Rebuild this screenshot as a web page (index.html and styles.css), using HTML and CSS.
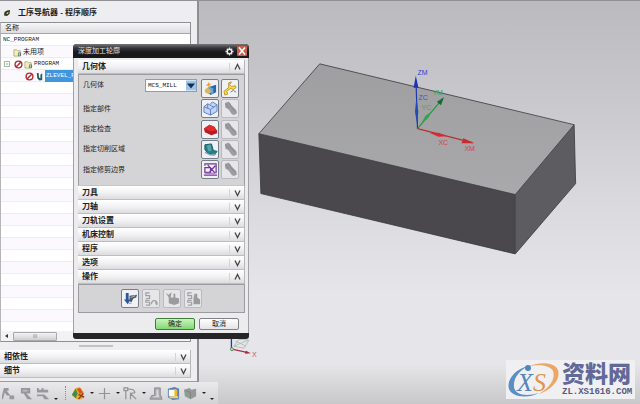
FILE: index.html
```html
<!DOCTYPE html>
<html lang="zh-CN">
<head>
<meta charset="utf-8">
<meta name="viewport" content="width=device-width, initial-scale=1">
<title>工序导航器 - 程序顺序</title>
<link rel="stylesheet" href="styles.css">
</head>
<body>
<svg class="defs" aria-hidden="true">
  <symbol id="down" viewBox="0 0 8 8"><path d="M1.5 1.5 4 6.5 6.500 1.500" fill="none" stroke="#444" stroke-width="1.300"/></symbol>
  <symbol id="up" viewBox="0 0 8 8"><path d="M1.500 6.500 4 1.500 6.500 6.500" fill="none" stroke="#444" stroke-width="1.300"/></symbol>
  <symbol id="torch" viewBox="0 0 16 16"><path d="M2 2 6 .5 9 4.500 14 9.500 15 13 12 15 9.500 14 6 9 2.500 7Z" fill="#9c9ca2"/><path d="M3 3 6 7 M7 2 8 5.500 13 11" stroke="#85858b" stroke-width="1" fill="none"/></symbol>
  <symbol id="ban" viewBox="0 0 10 10"><circle cx="5" cy="5" r="3.800" fill="#fff" stroke="#b3262c" stroke-width="1.500"/><path d="M2.500 7.500 7.500 2.500" stroke="#b3262c" stroke-width="1.500"/></symbol>
  <symbol id="folder" viewBox="0 0 10 10"><path d="M1 2H4L5 3H8V9H1Z" fill="#f3efb5" stroke="#a29e68" stroke-width=".8"/><path d="M5.500 5H9V9H5.500Z" fill="#667a80"/><path d="M7 5.500V8.500" stroke="#dfe" stroke-width=".8"/></symbol>
</svg>
<div class="app">
  <aside class="navigator">
    <h1 class="nav-title">
      <svg class="nav-mark" viewBox="0 0 8 8" aria-hidden="true"><path d="M1.500 3 4 1.500 7 1 6.500 5 4 7 1 6.500Z" fill="#33391e"/><path d="M3 4.500 5.500 2.500 5 5Z" fill="#d5df86"/></svg>
      <span>工序导航器 - 程序顺序</span>
    </h1>
    <div class="tree">
      <div class="tree-head">名称</div>
      <ul class="tree-rows">
        <li class="mono">NC_PROGRAM</li>
        <li class="level-1"><svg class="icon-s"><use href="#folder"/></svg>未用项</li>
        <li class="mono level-0"><svg class="expander" viewBox="0 0 7 7"><path d="M.5.5H6.500V6.500H.5ZM2 3.500H5" fill="none" stroke="#8da58d"/></svg><svg class="icon-s"><use href="#ban"/></svg><svg class="icon-s"><use href="#folder"/></svg>PROGRAM</li>
        <li class="mono level-2"><svg class="icon-s"><use href="#ban"/></svg><svg class="icon-s" viewBox="0 0 10 10"><path d="M2 1 4 1 4.500 6 6 7V3L8 1.500V9L5 9.500 2.500 7Z" fill="#245b62"/></svg><span class="selected">ZLEVEL_PROFILE</span></li>
      </ul>
      <div class="scroller"><svg class="scroll-arrow" viewBox="0 0 5 6"><path d="M4 1V5L1 3Z" fill="#333"/></svg><span class="thumb">III</span></div>
    </div>
    <div class="splitter"></div>
    <div class="drawers">
      <button class="bar" type="button"><span>相依性</span><svg class="chev"><use href="#down"/></svg></button>
      <button class="bar" type="button"><span>细节</span><svg class="chev"><use href="#down"/></svg></button>
    </div>
  </aside>

  <main class="viewport">
    <svg class="scene" viewBox="198 0 442 382" preserveAspectRatio="xMinYMin meet" role="img" aria-label="毛坯">
      <defs><linearGradient id="topface" x1="0" y1="0" x2="0" y2="1"><stop offset="0" stop-color="#9f9fa2"/><stop offset="1" stop-color="#a9a9ab"/></linearGradient></defs>
      <path d="M319 64 574 125 515 195 258 134Z" fill="url(#topface)"/>
      <path d="M258 134 515 195V254.500L260 194Z" fill="#4b484d"/>
      <path d="M515 195 574 125 575.500 184 515 254.500Z" fill="#5d5c60"/>
      <path d="M319 64 574 125 515 195 258 134ZM258 134 260 194 515 254.500 575.500 184 574 125M515 195V254" fill="none" stroke="#3a3a3e" stroke-width=".8"/>
      <g stroke-width="1.200" font-family="Liberation Sans" font-size="7">
        <path d="M417 129 415.500 80" stroke="#2036a8"/><path d="M415.300 76 418 88H413Z" fill="#1e33b5"/><path d="M415.800 98 417.800 112 416.500 124 414.500 112Z" fill="#2448b6"/>
        <path d="M417 129 442 99" stroke="#209a3c"/><path d="M443.500 97.500 440.500 105.500 436.500 102Z" fill="#176a32"/><path d="M431 112 428 118 420 125 425 116Z" fill="#31a34b"/>
        <path d="M417 129 472 143" stroke="#b83030"/><path d="M447 136.500 438 137 429 133 438 133Z" fill="#d52a32"/><path d="M474 143.500 461 143.500 463 138.500Z" fill="#c92a30"/>
        <text x="417" y="75" fill="#2745d2">ZM</text><text x="418" y="100" fill="#3955ca">ZC</text>
        <text x="432" y="95" fill="#3aa34b">YM</text><text x="421" y="110" fill="#579d63">YC</text>
        <text x="438" y="145" fill="#c64a4c">XC</text><text x="464" y="151" fill="#c64a4c">XM</text>
      </g>
      <g fill="none">
        <path d="M230.500 336V349" stroke="#2637b2" stroke-width="1.300"/>
        <path d="M233 347 238 340 248 341 243 349ZM235 342 245 347M233 347 247 341" stroke="#aab8ae" stroke-width=".8"/>
        <path d="M231 350 247 353.500" stroke="#b52b40" stroke-width="1.300"/><path d="M250 354 244 354.500 245 351.500Z" fill="#a8283b"/>
        <circle cx="231" cy="350" r="1.500" fill="#d2e5d4" stroke="#55875b"/>
        <text x="251" y="358" font-family="Liberation Sans" font-size="7" fill="#c25a60">X</text>
      </g>
    </svg>
  </main>

  <footer class="toolbar">
    <button type="button" aria-label="创建程序"><svg viewBox="0 0 16 16" fill="#98989c"><path d="M2 2H7V5H5L9 10H5L3 7 1 14H-1ZM8 10H13V14H8Z"/></svg></button>
    <button type="button" aria-label="创建刀具"><svg viewBox="0 0 16 16" fill="#98989c"><path d="M2 2H12V8H8L14 14H9L5 8H2Z"/><path d="M4 4H9V6H4Z" fill="#bbb"/></svg></button>
    <button type="button" aria-label="创建几何体"><svg viewBox="0 0 16 16" fill="#98989c"><path d="M1 2H3V4H6V2H8V4H13V7H1ZM1 9H9L14 14H9L7 11H1Z"/></svg></button>
    <span class="more"></span>
    <span class="grip"></span>
    <button type="button" aria-label="生成刀轨"><svg viewBox="0 0 16 16"><path d="M1 10 4 3 9 1 14 7 12 14 6 14Z" fill="#e2af2a"/><path d="M1 9 5 3 7 8 5 13Z" fill="#418c3d"/><path d="M6 3 10 2 13 8 9 8Z" fill="#d85423"/><path d="M8 9 14 12M8 14 13 8" stroke="#993523" stroke-width="1.500"/></svg></button>
    <span class="drop"></span>
    <button type="button" aria-label="点"><svg viewBox="0 0 16 16"><path d="M8 2V14M2 8H14" stroke="#929297" stroke-width="1.300"/></svg></button>
    <span class="drop"></span>
    <button type="button" aria-label="草图"><svg viewBox="0 0 16 16" fill="none" stroke="#929297" stroke-width="1.300"><path d="M1 2H5V5H1ZM3 5V14M5 3 11 4 13 7M8 14V8L14 14M8 8 13 7"/></svg></button>
    <span class="drop"></span>
    <button type="button" aria-label="拉伸"><svg viewBox="0 0 16 16"><path d="M6 2H12V9L14 14H1L3 10H6Z" fill="#acacb0" stroke="#8c8c90"/><path d="M8 4H10V9L11 12H4L5 11H8Z" fill="#dcdcde"/></svg></button>
    <button type="button" aria-label="视图"><svg viewBox="0 0 16 16"><path d="M2 3 9 1 14 3V14L7 15 2 12Z" fill="#5781bd"/><path d="M3 4H10V11H3Z" fill="#fffbea"/><path d="M9 3 12 4V12L9 13Z" fill="#efb734"/><path d="M4 12H13" stroke="#f4d46d" stroke-width="2"/></svg></button>
    <button type="button" aria-label="实体"><svg viewBox="0 0 16 16"><path d="M1 4 7 2 9 4 14 3V11L8 14 2 11Z" fill="#939994"/><path d="M3 5 8 7V13" stroke="#7d837e" fill="none"/></svg></button>
    <span class="drop"></span>
    <span class="more"></span>
  </footer>

  <section class="dialog" role="dialog" aria-label="深度加工轮廓">
    <header class="dialog-title">
      <span>深度加工轮廓</span>
      <button class="plain" type="button" aria-label="设置"><svg viewBox="0 0 10 10"><path d="M5 .5V9.500M.5 5H9.500M2 2 8 8M8 2 2 8" stroke="#ddd" stroke-width="1.500"/><circle cx="5" cy="5" r="2.500" fill="#222" stroke="#eee" stroke-width="1.500"/></svg></button>
      <button class="plain close" type="button" aria-label="关闭"><svg viewBox="0 0 10 10"><path d="M2 1.500 8 8.500M8 1.500 2 8.500" stroke="#fff" stroke-width="1.500"/></svg></button>
    </header>
    <div class="dialog-body">
      <div class="groups">
        <button class="bar" type="button"><span>几何体</span><svg class="chev"><use href="#up"/></svg></button>
        <div class="fields">
          <div class="field top">
            <label for="geometry">几何体</label>
            <span class="combo"><select id="geometry"><option>MCS_MILL</option></select><svg class="combo-arrow" viewBox="0 0 10 10" aria-hidden="true"><path d="M0 0H10V10H0Z" fill="#9cc5ec"/><path d="M1 3H9L5 8Z" fill="#162c4b"/></svg></span>
            <button class="tool" type="button" aria-label="新建几何体"><svg viewBox="0 0 16 16"><path d="M7 6 14 4V12L8 15 5 12Z" fill="#2765ad"/><path d="M7 6 11 8V14L5 12V7Z" fill="#68a5df"/><path d="M2 9 5 7 9 11 6 14 2 12Z" fill="#d9b956"/><path d="M6 1 7 3 9 3 7 5 7 7 5 5 3 5 5 3Z" fill="#e8a735"/></svg></button>
            <button class="tool" type="button" aria-label="编辑几何体"><svg viewBox="0 0 16 16"><path d="M9 1 7 4 9 6 13 5 14 7 11 9 8 8 4 11 5 14 2 15 1 11 6 7 6 2Z" fill="#f8df42" stroke="#a98316" stroke-width=".8"/><path d="M8 12 11 10 14 12" fill="none" stroke="#77777a"/></svg></button>
          </div>
          <div class="field">
            <span class="name">指定部件</span>
            <button class="tool" type="button" aria-label="指定部件"><svg viewBox="0 0 16 16"><path d="M1 6 5 3 7 4 10 1 15 4V11L8 15 1 12Z" fill="#c3d5f7" stroke="#5c7fc0"/><path d="M1 6 8 9 15 4M8 9V15M5 3V8M7 4 12 7" stroke="#5c7fc0" fill="none"/></svg></button>
            <button class="tool off" type="button" aria-label="显示部件" disabled><svg><use href="#torch"/></svg></button>
          </div>
          <div class="field">
            <span class="name">指定检查</span>
            <button class="tool" type="button" aria-label="指定检查"><svg viewBox="0 0 16 16"><path d="M1 7 7 3 12 5 15 9V12L9 14 2 11Z" fill="#b31c20"/><path d="M1 7 7 3 12 5 14 9 8 10Z" fill="#e12b2e"/></svg></button>
            <button class="tool off" type="button" aria-label="显示检查" disabled><svg><use href="#torch"/></svg></button>
          </div>
          <div class="field">
            <span class="name">指定切削区域</span>
            <button class="tool" type="button" aria-label="指定切削区域"><svg viewBox="0 0 16 16"><path d="M2 3 9 2 11 9 15 10 12 14 5 12 2 8Z" fill="#27808b" stroke="#175a67"/><path d="M4 4 8 3 9 9 6 10Z" fill="#51aaa9"/><path d="M2 11 8 14 14 13" fill="none" stroke="#8ba8c3" stroke-width="1.500"/></svg></button>
            <button class="tool off" type="button" aria-label="显示切削区域" disabled><svg><use href="#torch"/></svg></button>
          </div>
          <div class="field">
            <span class="name">指定修剪边界</span>
            <button class="tool" type="button" aria-label="指定修剪边界"><svg viewBox="0 0 16 16" fill="none" stroke="#723799" stroke-width="1.300"><path d="M2 4V2H14V12M1 14H15M2 6H8V11H2ZM5 3 13 12M13 4 6 12"/><path d="M2 12H13" stroke="#ad76c4"/></svg></button>
            <button class="tool off" type="button" aria-label="显示修剪边界" disabled><svg><use href="#torch"/></svg></button>
          </div>
        </div>
        <button class="bar" type="button"><span>刀具</span><svg class="chev"><use href="#down"/></svg></button>
        <button class="bar" type="button"><span>刀轴</span><svg class="chev"><use href="#down"/></svg></button>
        <button class="bar" type="button"><span>刀轨设置</span><svg class="chev"><use href="#down"/></svg></button>
        <button class="bar" type="button"><span>机床控制</span><svg class="chev"><use href="#down"/></svg></button>
        <button class="bar" type="button"><span>程序</span><svg class="chev"><use href="#down"/></svg></button>
        <button class="bar" type="button"><span>选项</span><svg class="chev"><use href="#down"/></svg></button>
        <button class="bar" type="button"><span>操作</span><svg class="chev"><use href="#up"/></svg></button>
        <div class="actions">
          <button class="tool" type="button" aria-label="生成"><svg viewBox="0 0 16 16"><path d="M3 2H6V9H8L5 14 1 9H3Z" fill="#285898"/><path d="M7 5 15 4 14 7 11 8 9 12 7 11Z" fill="#4b5666"/><path d="M8 7 13 5" stroke="#b8c7d4"/><path d="M6 13H9" stroke="#6892be"/></svg></button>
          <button class="tool off" type="button" aria-label="重播" disabled><svg viewBox="0 0 16 16" fill="none" stroke="#a0a0a3" stroke-width="1.300"><path d="M6 2H2V5H6V8H2M6 10H2V12H6V15H2M8 14C8 9 14 9 14 14M12 12 14 15"/></svg></button>
          <button class="tool off" type="button" aria-label="确认" disabled><svg viewBox="0 0 16 16" fill="#9b9b9e"><path d="M1 2 4 4 7 1 6 7 9 7 9 3H11V7L15 8V13L10 15 4 13V7Z"/></svg></button>
          <button class="tool off" type="button" aria-label="列表" disabled><svg viewBox="0 0 16 16"><path d="M6 2H2V5H6V8H2M6 10H2V12H6V15H2" fill="none" stroke="#a0a0a3" stroke-width="1.300"/><path d="M9 3H12V7L15 9V14H8V8Z" fill="#9b9b9e"/></svg></button>
        </div>
      </div>
      <div class="buttons">
        <button class="push ok" type="button">确定</button>
        <button class="push" type="button">取消</button>
      </div>
    </div>
  </section>

  <div class="brand">
    <svg class="brand-mark" viewBox="0 0 56 38" aria-hidden="true">
      <path d="M23 5C10 7 0 19 3 28 6 36 21 38 33 32 20 36 9 34 8 26 7 18 13 9 23 5Z" fill="#5b8fc4"/>
      <path d="M20 6C34 0 49 1 52 9 55 19 45 29 33 33 43 27 50 18 47 10 44 4 31 3 20 6Z" fill="#eca766"/>
      <circle cx="22" cy="7" r="3" fill="#4f87bd"/>
      <text x="11" y="30" font-family="Liberation Serif" font-style="italic" font-size="26" fill="#5585bb">X</text>
      <text x="27" y="30" font-family="Liberation Serif" font-style="italic" font-size="26" fill="#e2944e">S</text>
    </svg>
    <div class="brand-text"><strong>资料网</strong><span>ZL.XS1616.COM</span></div>
  </div>
</div>
</body>
</html>
```
FILE: styles.css
```css
* { box-sizing: border-box; }
body {
  margin: 0;
  font: 7px/12px "Liberation Sans", "Noto Sans CJK SC", sans-serif;
  color: #222;
}
button, select { font: inherit; color: inherit; padding: 0; margin: 0; }
svg { display: block; flex: none; }
.defs { position: absolute; width: 0; height: 0; }

.app {
  position: relative;
  min-height: 100vh;
  display: grid;
  grid-template: 1fr 22px / 199px 1fr;
  overflow: hidden;
  border-top: 1px solid #929296;
  background: linear-gradient(#bbbbbf 0%, #c9c9cd 25%, #dadade 50%, #e6e6ea 73%, #e6e6ea 90%, #dadadc 94%, #c8c8ca 100%);
}

.navigator {
  display: flex;
  flex-direction: column;
  padding: 0 6px 3px 0;
  background: #eeeef1;
  border-right: 2px solid #8e8e94;
  border-bottom: 1px solid #9b9ba0;
}
.nav-title {
  display: flex;
  align-items: center;
  gap: 7px;
  height: 21px;
  margin: 0;
  padding: 2px 0 0 3px;
  font-size: 8px;
  font-weight: 700;
}
.nav-mark { width: 8px; height: 8px; }
.tree {
  flex: 1;
  display: flex;
  flex-direction: column;
  border: 1px solid #8f8f94;
  border-left-color: #b5b5ba;
  background: #fff;
}
.tree-head {
  height: 11px;
  line-height: 10px;
  padding-left: 4px;
  border-bottom: 1px solid #a5a5aa;
  background: linear-gradient(#f6f6f8, #dedee2);
}
.tree-rows {
  flex: 1;
  margin: 0;
  padding: 0;
  list-style: none;
  background: repeating-linear-gradient(#fff 0 11px, #eeecf2 11px 12px, #fbf9fd 12px 23px, #eeecf2 23px 24px);
}
.tree-rows li {
  display: flex;
  align-items: center;
  gap: 1px;
  height: 12px;
  padding-left: 2px;
  white-space: nowrap;
}
.mono, .combo select { font-family: "Liberation Mono", monospace; font-size: 6px; }
.tree-rows .level-1 { padding-left: 12px; }
.tree-rows .level-2 { padding-left: 24px; }
.icon-s { width: 9px; height: 9px; }
.expander { width: 6px; height: 6px; margin: 0 3px 0 1px; }
.selected { padding: 0 1px; color: #fff; background: #3f95de; }
.scroller {
  display: flex;
  align-items: center;
  gap: 4px;
  height: 10px;
  padding-left: 3px;
  background: #f2f2f4;
}
.scroll-arrow { width: 5px; height: 6px; }
.thumb {
  width: 44px;
  height: 9px;
  border: 1px solid #a9a9ad;
  border-radius: 1px;
  background: linear-gradient(#f4f4f6, #cfcfd3);
  font-size: 5px;
  line-height: 7px;
  text-align: center;
  color: #777;
}
.splitter {
  width: 34px;
  height: 2px;
  margin: 3px auto 3px 79px;
  background: #c2c2c7;
}
.drawers { display: flex; flex-direction: column; }

.bar {
  display: flex;
  align-items: center;
  justify-content: space-between;
  height: 14px;
  padding: 0 2px 0 4px;
  border: 0;
  border-bottom: 1px solid #bdbdc2;
  border-right: 1px solid #b5b5ba;
  background: linear-gradient(#fff 0%, #f2f2f4 50%, #dcdce0 100%);
  font-size: 8px;
  font-weight: 700;
  line-height: 12px;
}
.chev {
  width: 13px;
  height: 8px;
  padding-left: 3px;
  border-left: 1px solid #d3d3d8;
}

.viewport { min-width: 0; }
.scene { width: 100%; height: auto; margin-top: -1px; }

.toolbar {
  grid-column: 1 / -1;
  display: flex;
  align-items: center;
  width: 218px;
  padding-left: 1px;
  background: linear-gradient(#eaeaec, #d2d2d5);
}
.toolbar button {
  width: 17px;
  height: 16px;
  border: 0;
  background: none;
}
.toolbar svg { width: 15px; height: 15px; margin: auto; }
.drop { width: 9px; display: flex; justify-content: center; }
.drop::after { content: ""; border: 2px solid transparent; border-top-color: #222; border-bottom: 0; }
.more { width: 8px; display: flex; justify-content: center; align-self: flex-end; padding-bottom: 4px; }
.more::after { content: ""; border: 2px solid transparent; border-top-color: #222; border-bottom: 0; }
.grip { width: 1px; height: 14px; margin: 0 4px 0 5px; border-left: 1px dotted #88888d; }

.dialog {
  position: absolute;
  left: 73px;
  top: 43px;
  width: 176px;
  border-radius: 4px 4px 3px 3px;
  border-bottom: 6px solid #252427;
  background: #252427;
}
.dialog-title {
  display: flex;
  align-items: center;
  gap: 3px;
  height: 14px;
  padding: 0 2px 0 5px;
  border-radius: 4px 4px 0 0;
  background: linear-gradient(#77777b 0%, #353438 30%, #19181b 60%);
  color: #e4e4e7;
}
.dialog-title span { flex: 1; }
.plain {
  width: 10px;
  height: 10px;
  border: 0;
  border-radius: 1px;
  background: none;
}
.close { background: #c65f4e; }
.plain svg { width: 9px; height: 9px; margin: auto; }
.close svg { width: 10px; height: 10px; }
.dialog-body {
  padding: 2px 3px 3px 4px;
  border: 1px solid #a2a2a6;
  border-width: 0 1px;
  background: #ececef;
}
.groups { display: flex; flex-direction: column; }
.fields {
  display: flex;
  flex-direction: column;
  justify-content: space-between;
  height: 112px;
  padding: 4px 5px 6px 4px;
  border: 1px solid #9b9ba0;
  border-bottom-color: #c6c6ca;
  background: #d4d4d6;
}
.field { display: flex; align-items: center; gap: 2px; }
.field.top { align-items: flex-start; }
.field label, .name { flex: 1; }
.combo { position: relative; width: 52px; height: 13px; margin-right: 2px; }
.combo select {
  display: block;
  width: 100%;
  height: 13px;
  padding-left: 2px;
  border: 1px solid #8b9db1;
  border-radius: 0;
  appearance: none;
  background: #fff;
  color: #111;
}
.combo-arrow { position: absolute; right: 1px; top: 1px; width: 10px; height: 11px; pointer-events: none; }
.tool {
  width: 18px;
  height: 19px;
  border: 1px solid #737f8a;
  border-radius: 2px;
  background: #f1f1f4;
}
.tool.off { border-color: #b9b9be; background: #e6e6e9; }
.tool svg { width: 15px; height: 15px; margin: auto; }
.actions {
  display: flex;
  justify-content: center;
  align-items: center;
  gap: 3px;
  height: 29px;
  border: 1px solid #9b9ba0;
  background: #d4d4d6;
}
.buttons { display: flex; justify-content: flex-end; gap: 4px; padding: 5px 6px 0 0; }
.push {
  width: 40px;
  height: 12px;
  border: 1px solid #818187;
  border-radius: 2px;
  background: linear-gradient(#fff, #e4e4e7);
  line-height: 10px;
}
.ok { border-color: #3e7c3a; background: linear-gradient(#c9f5bd, #83d876); }

.brand {
  position: absolute;
  right: 5px;
  bottom: 5px;
  display: flex;
  align-items: center;
  width: 129px;
  height: 39px;
  background: #f0f0f3;
}
.brand-mark { width: 56px; height: 38px; }
.brand-text { display: flex; flex-direction: column; color: #626998; }
.brand-text strong { font-size: 23px; line-height: 25px; font-weight: 900; }
.brand-text span { font: 700 9px/10px "Liberation Mono", monospace; color: #555b80; }
```
